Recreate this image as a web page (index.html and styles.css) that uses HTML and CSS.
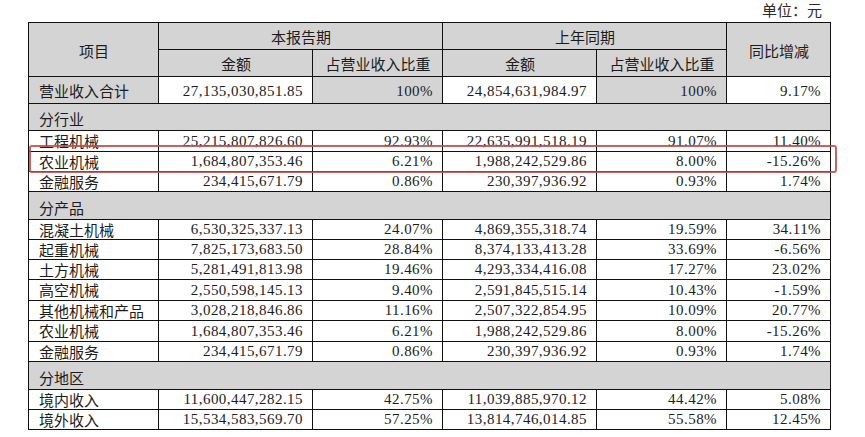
FILE: index.html
```html
<!DOCTYPE html>
<html lang="zh-CN">
<head>
<meta charset="utf-8">
<title>营业收入构成</title>
<link rel="stylesheet" href="styles.css">
</head>
<body>
<div class="page">
  <div class="unit">单位：元</div>
  <div class="table-wrap">
    <table class="rev">
      <colgroup>
        <col class="c-item"><col class="c-amt"><col class="c-pct"><col class="c-amt"><col class="c-pct"><col class="c-yoy">
      </colgroup>
      <thead>
        <tr class="hrow">
          <th rowspan="2">项目</th>
          <th colspan="2">本报告期</th>
          <th colspan="2">上年同期</th>
          <th rowspan="2">同比增减</th>
        </tr>
        <tr class="hrow">
          <th>金额</th>
          <th>占营业收入比重</th>
          <th>金额</th>
          <th>占营业收入比重</th>
        </tr>
      </thead>
      <tbody>
        <tr class="total">
          <td class="name gray">营业收入合计</td>
          <td class="num">27,135,030,851.85</td>
          <td class="num gray">100%</td>
          <td class="num">24,854,631,984.97</td>
          <td class="num gray">100%</td>
          <td class="num">9.17%</td>
        </tr>
        <tr class="section"><td colspan="6">分行业</td></tr>
        <tr class="row tall"><td class="name">工程机械</td><td class="num">25,215,807,826.60</td><td class="num">92.93%</td><td class="num">22,635,991,518.19</td><td class="num">91.07%</td><td class="num">11.40%</td></tr>
        <tr class="row"><td class="name">农业机械</td><td class="num">1,684,807,353.46</td><td class="num">6.21%</td><td class="num">1,988,242,529.86</td><td class="num">8.00%</td><td class="num">-15.26%</td></tr>
        <tr class="row"><td class="name">金融服务</td><td class="num">234,415,671.79</td><td class="num">0.86%</td><td class="num">230,397,936.92</td><td class="num">0.93%</td><td class="num">1.74%</td></tr>
        <tr class="section sec-tall"><td colspan="6">分产品</td></tr>
        <tr class="row"><td class="name">混凝土机械</td><td class="num">6,530,325,337.13</td><td class="num">24.07%</td><td class="num">4,869,355,318.74</td><td class="num">19.59%</td><td class="num">34.11%</td></tr>
        <tr class="row"><td class="name">起重机械</td><td class="num">7,825,173,683.50</td><td class="num">28.84%</td><td class="num">8,374,133,413.28</td><td class="num">33.69%</td><td class="num">-6.56%</td></tr>
        <tr class="row"><td class="name">土方机械</td><td class="num">5,281,491,813.98</td><td class="num">19.46%</td><td class="num">4,293,334,416.08</td><td class="num">17.27%</td><td class="num">23.02%</td></tr>
        <tr class="row tall"><td class="name">高空机械</td><td class="num">2,550,598,145.13</td><td class="num">9.40%</td><td class="num">2,591,845,515.14</td><td class="num">10.43%</td><td class="num">-1.59%</td></tr>
        <tr class="row"><td class="name">其他机械和产品</td><td class="num">3,028,218,846.86</td><td class="num">11.16%</td><td class="num">2,507,322,854.95</td><td class="num">10.09%</td><td class="num">20.77%</td></tr>
        <tr class="row tall"><td class="name">农业机械</td><td class="num">1,684,807,353.46</td><td class="num">6.21%</td><td class="num">1,988,242,529.86</td><td class="num">8.00%</td><td class="num">-15.26%</td></tr>
        <tr class="row"><td class="name">金融服务</td><td class="num">234,415,671.79</td><td class="num">0.86%</td><td class="num">230,397,936.92</td><td class="num">0.93%</td><td class="num">1.74%</td></tr>
        <tr class="section sec-tall"><td colspan="6">分地区</td></tr>
        <tr class="row"><td class="name">境内收入</td><td class="num">11,600,447,282.15</td><td class="num">42.75%</td><td class="num">11,039,885,970.12</td><td class="num">44.42%</td><td class="num">5.08%</td></tr>
        <tr class="row"><td class="name">境外收入</td><td class="num">15,534,583,569.70</td><td class="num">57.25%</td><td class="num">13,814,746,014.85</td><td class="num">55.58%</td><td class="num">12.45%</td></tr>
      </tbody>
    </table>
    <div class="highlight"></div>
  </div>
</div>
</body>
</html>
```

FILE: styles.css
```css
html, body {
  margin: 0;
  padding: 0;
  background: #ffffff;
}

.page {
  width: 865px;
  height: 437px;
  padding: 0 0 0 28px;
  box-sizing: border-box;
  font-family: "Liberation Serif", "Noto Sans CJK SC", serif;
  color: #1c1c1c;
  overflow: hidden;
}

.unit {
  width: 794px;
  height: 22px;
  line-height: 20px;
  font-size: 15px;
  text-align: right;
  font-family: "Noto Sans CJK SC", sans-serif;
  color: #2a2a2a;
}

.table-wrap {
  position: relative;
  width: 802px;
}

.rev {
  border-collapse: collapse;
  table-layout: fixed;
  width: 802px;
  font-size: 15px;
}

.c-item { width: 130px; }
.c-amt { width: 154px; }
.c-pct { width: 130px; }
.c-yoy { width: 104px; }

.rev th,
.rev td {
  border: 1px solid #111111;
  padding: 0 9px 0 10px;
  white-space: nowrap;
  overflow: hidden;
  vertical-align: top;
}

.rev th {
  background: #d4d4d4;
  font-weight: normal;
  text-align: center;
  font-family: "Noto Sans CJK SC", sans-serif;
  line-height: 24px;
  padding-top: 2px;
}

.rev th[rowspan] {
  vertical-align: middle;
  padding-top: 2px;
}

.total td {
  line-height: 24px;
  padding-top: 2px;
}

.section td {
  background: #d4d4d4;
  font-family: "Noto Sans CJK SC", sans-serif;
  line-height: 22px;
  padding-top: 4px;
}

.section.sec-tall td {
  line-height: 23px;
}

.row td {
  line-height: 19px;
}

.row.tall td {
  line-height: 20px;
}

.name {
  font-family: "Noto Sans CJK SC", sans-serif;
  text-align: left;
}

.num {
  text-align: right;
  letter-spacing: 0.45px;
}

.gray { background: #d4d4d4; }

.highlight {
  position: absolute;
  left: 1px;
  top: 123px;
  width: 808px;
  height: 28px;
  box-sizing: border-box;
  border: 2px solid rgba(192, 70, 70, 0.85);
  border-radius: 3px;
}
```
